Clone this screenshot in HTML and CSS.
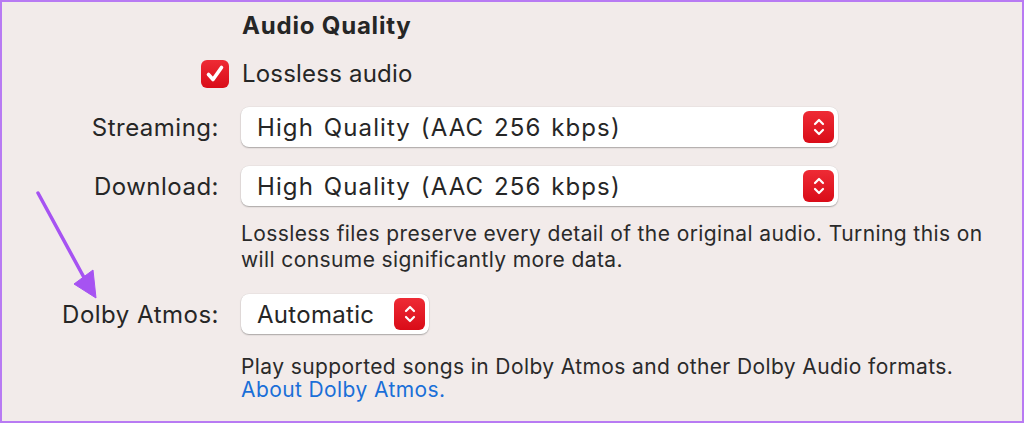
FILE: index.html
```html
<!DOCTYPE html>
<html lang="en">
<head>
  <meta charset="UTF-8">
  <meta name="viewport" content="width=device-width, initial-scale=1.0">
  <title>Audio Quality</title>
  <link rel="stylesheet" href="styles.css">
</head>
<body>
<div class="panel">
  <div class="row heading-row">
    <div></div>
    <h1>Audio Quality</h1>
  </div>

  <div class="row check-row">
    <div class="label">
      <span class="checkbox">
        <svg width="28" height="28" viewBox="0 0 28 28"><path d="M7.5 14.5 L12 19.5 L20.5 7.5" fill="none" stroke="#fff" stroke-width="3.6" stroke-linecap="round" stroke-linejoin="round"/></svg>
      </span>
    </div>
    <div class="value">Lossless audio</div>
  </div>

  <div class="row popup-row first">
    <div class="label">Streaming:</div>
    <div class="popup wide">
      <span>High Quality (AAC 256 kbps)</span>
      <span class="stepper">
        <svg width="14" height="20" viewBox="0 0 14 20"><path d="M3 7 L7 3 L11 7 M3 13 L7 17 L11 13" fill="none" stroke="#fff" stroke-width="2.2" stroke-linecap="round" stroke-linejoin="round"/></svg>
      </span>
    </div>
  </div>

  <div class="row popup-row">
    <div class="label">Download:</div>
    <div class="popup wide">
      <span>High Quality (AAC 256 kbps)</span>
      <span class="stepper">
        <svg width="14" height="20" viewBox="0 0 14 20"><path d="M3 7 L7 3 L11 7 M3 13 L7 17 L11 13" fill="none" stroke="#fff" stroke-width="2.2" stroke-linecap="round" stroke-linejoin="round"/></svg>
      </span>
    </div>
  </div>

  <div class="row">
    <div></div>
    <p class="note">Lossless files preserve every detail of the original audio. Turning this on will consume significantly more data.</p>
  </div>

  <div class="row popup-row dolby">
    <div class="label">Dolby Atmos:</div>
    <div class="popup small">
      <span>Automatic</span>
      <span class="stepper">
        <svg width="14" height="20" viewBox="0 0 14 20"><path d="M3 7 L7 3 L11 7 M3 13 L7 17 L11 13" fill="none" stroke="#fff" stroke-width="2.2" stroke-linecap="round" stroke-linejoin="round"/></svg>
      </span>
    </div>
  </div>

  <div class="row">
    <div></div>
    <p class="note tight">Play supported songs in Dolby Atmos and other Dolby Audio formats.<br><a href="#">About Dolby Atmos.</a></p>
  </div>

  <!-- annotation arrow -->
  <svg class="arrow" width="120" height="130" viewBox="0 180 120 130">
    <path d="M38 193 L87 283" fill="none" stroke="#a653f2" stroke-width="3.5" stroke-linecap="round"/>
    <path d="M96 298 L74 284 L93 270 Z" fill="#a653f2" stroke="#a653f2" stroke-width="1" stroke-linejoin="round"/>
  </svg>
</div>
</body>
</html>
```

FILE: styles.css
```css
body {
  margin: 0;
  font-family: Inter, "Noto Sans", sans-serif;
  color: #262626;
}
.panel {
  position: relative;
  width: 1024px;
  height: 423px;
  box-sizing: border-box;
  border: 2px solid #b87af3;
  background: #f2ebea;
}
.row {
  display: grid;
  grid-template-columns: 217px 1fr;
  column-gap: 22px;
  align-items: center;
}
.label {
  font-size: 24px;
  letter-spacing: 0.5px;
  display: flex;
  justify-content: flex-end;
  align-items: center;
}
.heading-row {
  margin-top: 9px;
}
h1 {
  margin: 0;
  font-size: 24px;
  font-weight: 700;
  letter-spacing: 0.8px;
  line-height: 30px;
  padding-left: 1px;
}
.check-row {
  margin-top: 18px;
  height: 28px;
}
.checkbox {
  width: 28px;
  height: 28px;
  margin-right: -10px;
  border-radius: 6px;
  background: linear-gradient(#ee2b35, #d90c18);
  display: flex;
  align-items: center;
  justify-content: center;
}
.value {
  font-size: 24px;
  letter-spacing: 0.2px;
  padding-left: 1px;
}
.popup-row {
  margin-top: 19px;
}
.popup-row.first {
  margin-top: 20px;
}
.popup {
  height: 40px;
  box-sizing: border-box;
  background: #fff;
  border-radius: 8px;
  box-shadow: 0 1px 1.5px rgba(0, 0, 0, 0.28), 0 0 0 0.5px rgba(0, 0, 0, 0.06);
  display: flex;
  align-items: center;
  justify-content: space-between;
  padding: 0 4px 0 16px;
  font-size: 24px;
  letter-spacing: 0.3px;
}
.popup.wide {
  width: 597px;
  letter-spacing: 1.1px;
  word-spacing: 2px;
}
.popup.small {
  width: 188px;
}
.stepper {
  width: 31px;
  height: 32px;
  border-radius: 6px;
  background: linear-gradient(#ee2b35, #d90c18);
  display: flex;
  align-items: center;
  justify-content: center;
}
.note {
  margin: 15px 0 0;
  max-width: 750px;
  font-size: 21px;
  letter-spacing: 0.4px;
  line-height: 26px;
  color: #2a2a2a;
}
.note.tight {
  margin-top: 21px;
  line-height: 23px;
}
.note a {
  color: #1a6fd8;
  text-decoration: none;
}
.popup-row.dolby {
  margin-top: 21px;
}
.arrow {
  position: absolute;
  left: -2px;
  top: 178px;
}
```
